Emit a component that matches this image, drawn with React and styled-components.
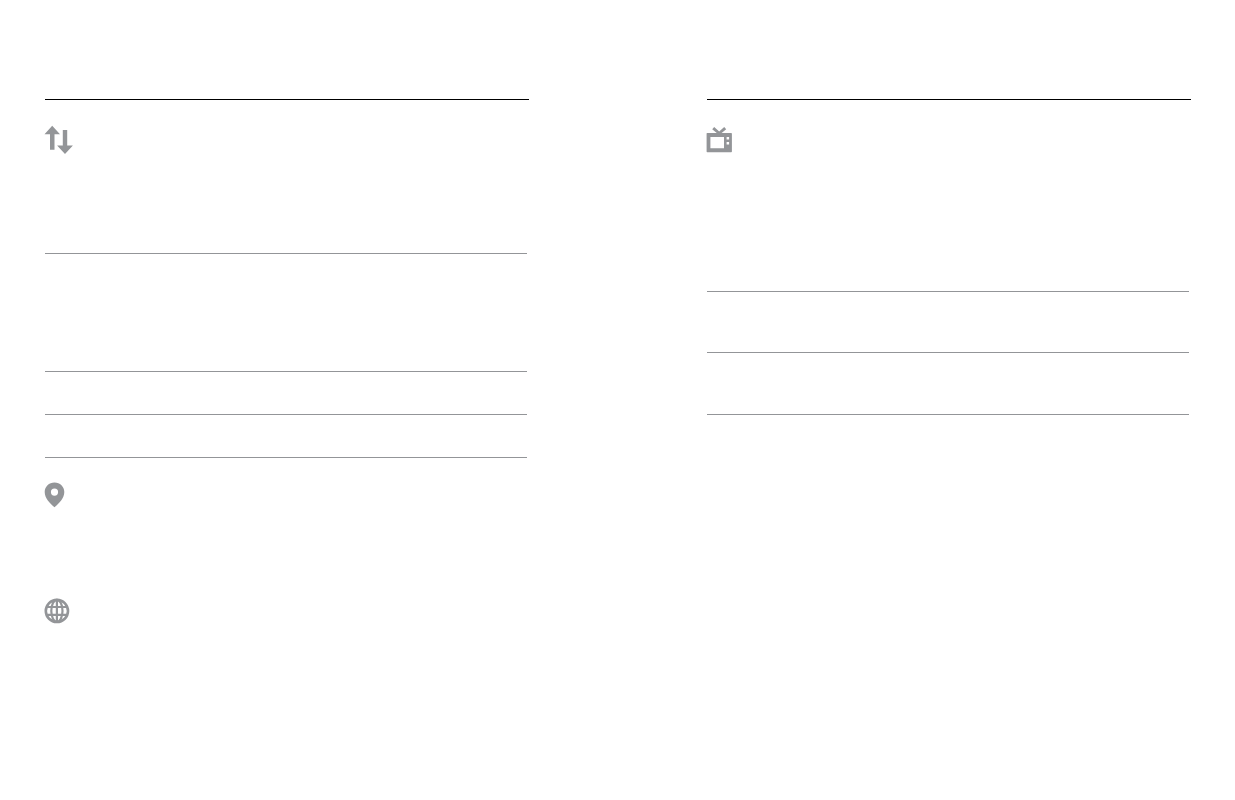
import React from "react";
import styled, { createGlobalStyle } from "styled-components";

const GlobalStyle = createGlobalStyle`
  *, *::before, *::after { box-sizing: border-box; }
  body { margin: 0; background: #fff; font-family: "Liberation Sans", Arial, sans-serif; }
`;

const Page = styled.main`
  display: grid;
  grid-template-columns: 1fr 1fr;
  column-gap: 178px;
  align-items: start;
  min-height: 100vh;
  padding: 99px 44px 0 45px;
`;

const Column = styled.section`
  display: flex;
  flex-direction: column;
  border-top: 1px solid #000;
`;

const Row = styled.div`
  min-height: ${(p) => p.$height}px;
  margin-right: 2px;
  padding-top: ${(p) => (p.$icon ? 25 : 0)}px;
  border-bottom: ${(p) => (p.$ruled ? "1px solid #939598" : "none")};
`;

const Icon = styled.svg`
  display: block;
  width: 30px;
  height: 30px;
  overflow: visible;
  fill: #939598;
`;

function ArrowsIcon() {
  return (
    <Icon viewBox="0 0 30 30" aria-hidden="true">
      <path d="M7.2 0.8 15 9.3H9.5V24.7H5V9.3H-.5Z" />
      <path d="M17.8 5H22.2V20.4H27.9L20 29 12.1 20.4H17.8Z" />
    </Icon>
  );
}

function TvIcon() {
  return (
    <Icon viewBox="0 0 30 30" aria-hidden="true">
      <path
        fillRule="evenodd"
        d="M0 8H9.8L5.2 4.2 7.2 2.1 12.2 6.5 17.2 2.1 19.2 4.2 14.6 8H24.2Q24.9 8 24.9 8.7V26.6Q24.9 27.3 24.2 27.3H.3Q-.4 27.3-.4 26.6V8.7Q-.4 8 0 8ZM3.4 12V23.3H17V12ZM19.6 12V14.4H22.1V12ZM19.6 17V19.4H22.1V17Z"
      />
    </Icon>
  );
}

function PinIcon() {
  return (
    <Icon viewBox="0 0 30 30" aria-hidden="true">
      <path
        fillRule="evenodd"
        d="M9.5-.6C15-.6 19.3 3.6 19.3 8.9 19.3 15.2 14.2 20.2 9.5 24.2 4.8 20.2-.3 15.2-.3 8.9-.3 3.6 4-.6 9.5-.6ZM9.5 5.5A3.6 3.6 0 1 0 9.5 12.7 3.6 3.6 0 1 0 9.5 5.5Z"
      />
    </Icon>
  );
}

function GlobeIcon() {
  return (
    <Icon viewBox="0 0 30 30" aria-hidden="true">
      <g fill="none" stroke="#939598" strokeWidth="2.2">
        <circle cx="11.9" cy="11.9" r="11.1" strokeWidth="2.6" />
        <ellipse cx="11.9" cy="11.9" rx="5.6" ry="11" />
        <path d="M11.9 1V23M2 8H22M2 15.8H22" />
      </g>
    </Icon>
  );
}

export default function App() {
  return (
    <>
      <GlobalStyle />
      <Page>
        <Column>
          <Row $height={154} $icon $ruled><ArrowsIcon /></Row>
          <Row $height={118} $ruled />
          <Row $height={43} $ruled />
          <Row $height={43} $ruled />
          <Row $height={116} $icon><PinIcon /></Row>
          <Row $height={116} $icon><GlobeIcon /></Row>
        </Column>
        <Column>
          <Row $height={192} $icon $ruled><TvIcon /></Row>
          <Row $height={61} $ruled />
          <Row $height={62} $ruled />
        </Column>
      </Page>
    </>
  );
}
